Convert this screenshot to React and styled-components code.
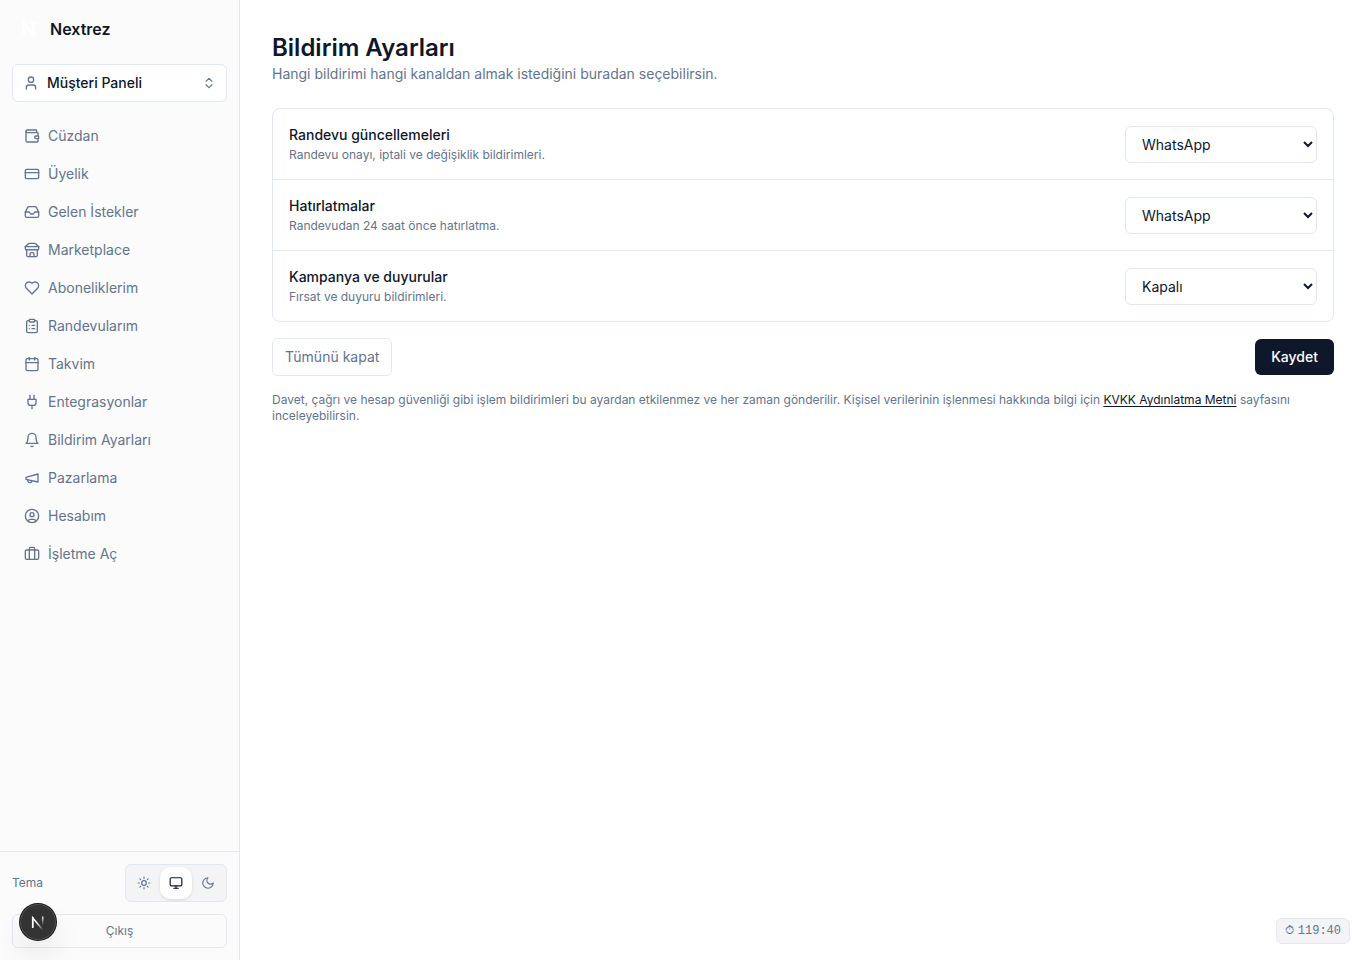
import React, { useState } from "react";
import styled, { createGlobalStyle } from "styled-components";
import {
  Briefcase,
  Calendar,
  ChevronsUpDown,
  CircleUser,
  ClipboardList,
  CreditCard,
  Inbox,
  Monitor,
  Sun,
  User,
  Wallet,
} from "lucide-react";

const GlobalStyle = createGlobalStyle`
  * {
    box-sizing: border-box;
  }
  body {
    margin: 0;
    background: #ffffff;
    color: #0f172a;
    font-family: Inter, "Liberation Sans", sans-serif;
    font-size: 14px;
    line-height: 20px;
    text-rendering: optimizeSpeed;
  }
  button, select {
    font: inherit;
    color: inherit;
    cursor: pointer;
  }
`;

const Layout = styled.div`
  display: flex;
  min-height: 100vh;
`;

const Sidebar = styled.aside`
  display: flex;
  flex-direction: column;
  flex-shrink: 0;
  width: 240px;
  height: 100vh;
  position: sticky;
  top: 0;
  background: #fbfbfb;
  border-right: 1px solid #e2e8f0;
`;

const Brand = styled.a`
  display: flex;
  align-items: center;
  gap: 8px;
  padding: 16px 16px 22px;
  color: #0f172a;
  font-size: 16px;
  font-weight: 600;
  line-height: 26px;
  text-decoration: none;
`;

const PanelButton = styled.button`
  display: flex;
  align-items: center;
  gap: 8px;
  margin: 0 12px;
  padding: 8px 10px;
  background: #ffffff;
  border: 1px solid #e2e8f0;
  border-radius: 6px;
  font-weight: 500;
  text-align: left;
  svg {
    color: #64748b;
  }
`;

const PanelName = styled.span`
  flex: 1;
`;

const Nav = styled.nav`
  display: flex;
  flex-direction: column;
  flex: 1;
  gap: 2px;
  padding: 16px 12px;
  overflow-y: auto;
`;

const NavLink = styled.a`
  display: flex;
  align-items: center;
  gap: 8px;
  padding: 8px 12px;
  border-radius: 6px;
  color: #64748b;
  text-decoration: none;
  &:hover {
    background: #f1f5f9;
  }
`;

const SidebarFooter = styled.div`
  display: flex;
  flex-direction: column;
  gap: 12px;
  padding: 12px;
  border-top: 1px solid #e2e8f0;
  color: #64748b;
  font-size: 12px;
  line-height: 16px;
`;

const ThemeRow = styled.div`
  display: flex;
  align-items: center;
  justify-content: space-between;
`;

const ThemeSwitch = styled.div`
  display: flex;
  padding: 2px;
  background: #f4f4f6;
  border: 1px solid #e2e8f0;
  border-radius: 6px;
`;

const ThemeButton = styled.button`
  display: flex;
  align-items: center;
  justify-content: center;
  width: 32px;
  height: 32px;
  padding: 0;
  border: 0;
  border-radius: 10px;
  background: ${(props) => (props.$active ? "#ffffff" : "transparent")};
  color: ${(props) => (props.$active ? "#0f172a" : "#64748b")};
  box-shadow: ${(props) =>
    props.$active ? "0 1px 3px rgba(0, 0, 0, 0.12)" : "none"};
`;

const LogoutButton = styled.button`
  padding: 8px;
  background: transparent;
  border: 1px solid #e2e8f0;
  border-radius: 6px;
`;

const Main = styled.main`
  flex: 1;
  min-width: 0;
  padding: 32px;
`;

const Title = styled.h1`
  margin: 0;
  font-size: 24px;
  font-weight: 600;
  line-height: 32px;
`;

const Subtitle = styled.p`
  margin: 0 0 24px;
  color: #64748b;
`;

const Card = styled.section`
  border: 1px solid #e2e8f0;
  border-radius: 8px;
`;

const SettingRow = styled.div`
  display: flex;
  align-items: center;
  justify-content: space-between;
  gap: 16px;
  padding: 16px;
  & + & {
    border-top: 1px solid #e2e8f0;
  }
`;

const SettingText = styled.div`
  display: flex;
  flex-direction: column;
  gap: 2px;
`;

const SettingLabel = styled.label`
  font-weight: 500;
`;

const SettingHint = styled.span`
  color: #64748b;
  font-size: 12px;
  line-height: 16px;
`;

const ChannelSelect = styled.select`
  width: 192px;
  height: 37px;
  padding: 8px 12px;
  background: #ffffff;
  border: 1px solid #e2e8f0;
  border-radius: 6px;
`;

const Actions = styled.div`
  display: flex;
  align-items: center;
  justify-content: space-between;
  margin: 16px 0;
`;

const OutlineButton = styled.button`
  padding: 8px 12px;
  background: #ffffff;
  border: 1px solid #e2e8f0;
  border-radius: 6px;
  color: #64748b;
`;

const SaveButton = styled.button`
  padding: 8px 16px;
  background: #0f172a;
  border: 0;
  border-radius: 6px;
  color: #ffffff;
  font-weight: 500;
`;

const Note = styled.p`
  margin: 0;
  color: #64748b;
  font-size: 12px;
  line-height: 16px;
  a {
    color: #0f172a;
    text-underline-offset: 2px;
  }
`;

const DevBadge = styled.button`
  position: fixed;
  left: 20px;
  bottom: 20px;
  display: flex;
  align-items: center;
  justify-content: center;
  width: 36px;
  height: 36px;
  padding: 0;
  background: #333333;
  border: 0;
  border-radius: 50%;
  box-shadow: 0 0 0 1px #171717, inset 0 0 0 1px rgba(255, 255, 255, 0.14),
    0 16px 32px -8px rgba(0, 0, 0, 0.24);
`;

const SessionTimer = styled.div`
  position: fixed;
  right: 16px;
  bottom: 16px;
  display: flex;
  align-items: center;
  gap: 4px;
  padding: 4px 8px;
  background: #f4f4f6;
  border: 1px solid #e2e8f0;
  border-radius: 6px;
  color: #64748b;
  font-family: "Liberation Mono", monospace;
  font-size: 12px;
  line-height: 16px;
`;

function makeIcon(paths) {
  return function Icon({ size }) {
    return (
      <svg
        width={size}
        height={size}
        viewBox="0 0 24 24"
        fill="none"
        stroke="currentColor"
        strokeWidth="2"
        strokeLinecap="round"
        strokeLinejoin="round"
        aria-hidden="true"
      >
        {paths.map((d) => (
          <path key={d} d={d} />
        ))}
      </svg>
    );
  };
}

const StoreIcon = makeIcon([
  "m2 7 4.410-4.410A2 2 0 0 1 7.830 2h8.340a2 2 0 0 1 1.420.590L22 7",
  "M4 12v8a2 2 0 0 0 2 2h12a2 2 0 0 0 2-2v-8",
  "M15 22v-4a2 2 0 0 0-2-2h-2a2 2 0 0 0-2 2v4",
  "M2 7h20",
  "M22 7v3a2 2 0 0 1-2 2a2.700 2.700 0 0 1-1.590-.630.700.700 0 0 0-.820 0A2.700 2.700 0 0 1 16 12a2.700 2.700 0 0 1-1.590-.630.700.700 0 0 0-.820 0A2.700 2.700 0 0 1 12 12a2.700 2.700 0 0 1-1.590-.630.700.700 0 0 0-.820 0A2.700 2.700 0 0 1 8 12a2.700 2.700 0 0 1-1.590-.630.700.700 0 0 0-.820 0A2.700 2.700 0 0 1 4 12a2 2 0 0 1-2-2V7",
]);

const HeartIcon = makeIcon([
  "M19 14c1.490-1.460 3-3.210 3-5.500A5.500 5.500 0 0 0 16.500 3c-1.760 0-3 .500-4.500 2-1.500-1.500-2.740-2-4.500-2A5.500 5.500 0 0 0 2 8.500c0 2.300 1.500 4.050 3 5.500l7 7Z",
]);

const PlugIcon = makeIcon([
  "M12 22v-5",
  "M9 8V2",
  "M15 8V2",
  "M18 8v5a4 4 0 0 1-4 4h-4a4 4 0 0 1-4-4V8Z",
]);

const BellIcon = makeIcon([
  "M6 8a6 6 0 0 1 12 0c0 7 3 9 3 9H3s3-2 3-9",
  "M10.300 21a1.940 1.940 0 0 0 3.400 0",
]);

const MegaphoneIcon = makeIcon([
  "m3 11 18-5v12L3 14v-3z",
  "M11.600 16.800a3 3 0 1 1-5.800-1.600",
]);

const MoonIcon = makeIcon(["M12 3a6 6 0 0 0 9 9 9 9 0 1 1-9-9Z"]);

const navItems = [
  { label: "Cüzdan", icon: Wallet },
  { label: "Üyelik", icon: CreditCard },
  { label: "Gelen İstekler", icon: Inbox },
  { label: "Marketplace", icon: StoreIcon },
  { label: "Aboneliklerim", icon: HeartIcon },
  { label: "Randevularım", icon: ClipboardList },
  { label: "Takvim", icon: Calendar },
  { label: "Entegrasyonlar", icon: PlugIcon },
  { label: "Bildirim Ayarları", icon: BellIcon },
  { label: "Pazarlama", icon: MegaphoneIcon },
  { label: "Hesabım", icon: CircleUser },
  { label: "İşletme Aç", icon: Briefcase },
];

const themes = [
  { id: "light", label: "Açık", icon: Sun },
  { id: "system", label: "Sistem", icon: Monitor },
  { id: "dark", label: "Koyu", icon: MoonIcon },
];

const settings = [
  {
    id: "appointments",
    label: "Randevu güncellemeleri",
    hint: "Randevu onayı, iptali ve değişiklik bildirimleri.",
  },
  {
    id: "reminders",
    label: "Hatırlatmalar",
    hint: "Randevudan 24 saat önce hatırlatma.",
  },
  {
    id: "campaigns",
    label: "Kampanya ve duyurular",
    hint: "Fırsat ve duyuru bildirimleri.",
  },
];

function BrandMark() {
  return (
    <svg width="26" height="26" viewBox="0 0 26 26" fill="none" aria-hidden="true">
      <path d="M8 19V7.500L17 19V7" stroke="#ffffff" strokeWidth="3" />
      <circle cx="20" cy="7.500" r="1" fill="#ffffff" />
    </svg>
  );
}

function NextMark() {
  return (
    <svg width="36" height="36" viewBox="0 0 36 36" fill="none" aria-hidden="true">
      <defs>
        <linearGradient id="next-diagonal" x1="18" y1="18" x2="24" y2="25" gradientUnits="userSpaceOnUse">
          <stop stopColor="#fff" />
          <stop offset="1" stopColor="#fff" stopOpacity="0" />
        </linearGradient>
        <linearGradient id="next-stem" x1="23" y1="12" x2="23" y2="21" gradientUnits="userSpaceOnUse">
          <stop stopColor="#fff" />
          <stop offset="1" stopColor="#fff" stopOpacity="0" />
        </linearGradient>
      </defs>
      <path d="M12.700 23.500V13.800L22.800 26" stroke="url(#next-diagonal)" strokeWidth="1.500" />
      <path d="M12.700 24V13" stroke="#fff" strokeWidth="1.500" />
      <path d="M22.700 12.500V21" stroke="url(#next-stem)" strokeWidth="1.500" />
    </svg>
  );
}

function App() {
  const [theme, setTheme] = useState("system");
  const [channels, setChannels] = useState({
    appointments: "whatsapp",
    reminders: "whatsapp",
    campaigns: "off",
  });

  const closeAll = () =>
    setChannels({ appointments: "off", reminders: "off", campaigns: "off" });

  return (
    <>
      <GlobalStyle />
      <Layout>
        <Sidebar>
          <Brand href="#">
            <BrandMark />
            Nextrez
          </Brand>
          <PanelButton type="button">
            <User size={16} />
            <PanelName>Müşteri Paneli</PanelName>
            <ChevronsUpDown size={14} />
          </PanelButton>
          <Nav>
            {navItems.map(({ label, icon: Icon }) => (
              <NavLink href="#" key={label}>
                <Icon size={16} />
                {label}
              </NavLink>
            ))}
          </Nav>
          <SidebarFooter>
            <ThemeRow>
              <span>Tema</span>
              <ThemeSwitch>
                {themes.map(({ id, label, icon: Icon }) => (
                  <ThemeButton
                    key={id}
                    type="button"
                    aria-label={label}
                    $active={theme === id}
                    onClick={() => setTheme(id)}
                  >
                    <Icon size={14} />
                  </ThemeButton>
                ))}
              </ThemeSwitch>
            </ThemeRow>
            <LogoutButton type="button">Çıkış</LogoutButton>
          </SidebarFooter>
        </Sidebar>
        <Main>
          <Title>Bildirim Ayarları</Title>
          <Subtitle>
            Hangi bildirimi hangi kanaldan almak istediğini buradan seçebilirsin.
          </Subtitle>
          <Card>
            {settings.map(({ id, label, hint }) => (
              <SettingRow key={id}>
                <SettingText>
                  <SettingLabel htmlFor={id}>{label}</SettingLabel>
                  <SettingHint>{hint}</SettingHint>
                </SettingText>
                <ChannelSelect
                  id={id}
                  value={channels[id]}
                  onChange={(e) =>
                    setChannels({ ...channels, [id]: e.target.value })
                  }
                >
                  <option value="whatsapp">WhatsApp</option>
                  <option value="off">Kapalı</option>
                </ChannelSelect>
              </SettingRow>
            ))}
          </Card>
          <Actions>
            <OutlineButton type="button" onClick={closeAll}>
              Tümünü kapat
            </OutlineButton>
            <SaveButton type="button">Kaydet</SaveButton>
          </Actions>
          <Note>
            Davet, çağrı ve hesap güvenliği gibi işlem bildirimleri bu ayardan
            etkilenmez ve her zaman gönderilir. Kişisel verilerinin işlenmesi
            hakkında bilgi için <a href="#">KVKK Aydınlatma Metni</a> sayfasını
            inceleyebilirsin.
          </Note>
        </Main>
      </Layout>
      <DevBadge type="button" aria-label="Next.js">
        <NextMark />
      </DevBadge>
      <SessionTimer>
        <span>⏱</span>
        <span>119:40</span>
      </SessionTimer>
    </>
  );
}

export default App;
